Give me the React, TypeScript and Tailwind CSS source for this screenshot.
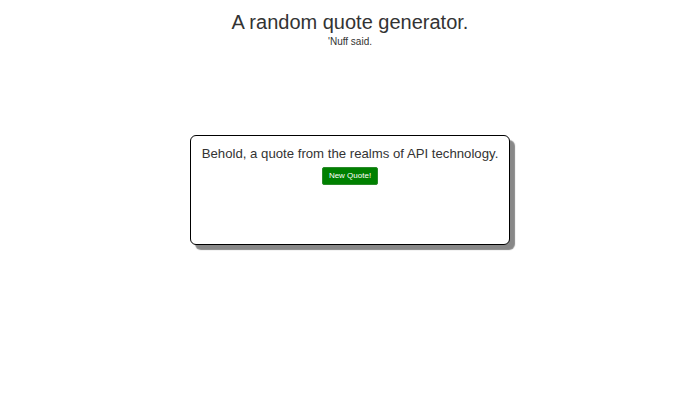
export default function App() {
  return (
    <main className="w-[700px] h-[400px] bg-white text-[#333] font-['Liberation_Sans',Arial,sans-serif]">
      <header className="flex flex-col items-center pt-[10px]">
        <h1 className="text-[20px] leading-[24px]">A random quote generator.</h1>
        <p className="text-[10px] leading-[12px] mt-[2px]">'Nuff said.</p>
      </header>
      <section className="flex justify-center mt-[87px]">
        <div className="w-[320px] h-[110px] bg-white border border-black rounded-[6px] shadow-[5px_5px_1px_#888] flex flex-col items-center pt-[10px]">
          <p className="text-[13.2px] leading-[16px] text-center whitespace-nowrap">Behold, a quote from the realms of API technology.</p>
          <button className="mt-[5px] h-[18px] px-[6px] bg-[#008000] text-white text-[8px] rounded-[2px] border border-[#2a8a2a]">
            New Quote!
          </button>
        </div>
      </section>
    </main>
  );
}
